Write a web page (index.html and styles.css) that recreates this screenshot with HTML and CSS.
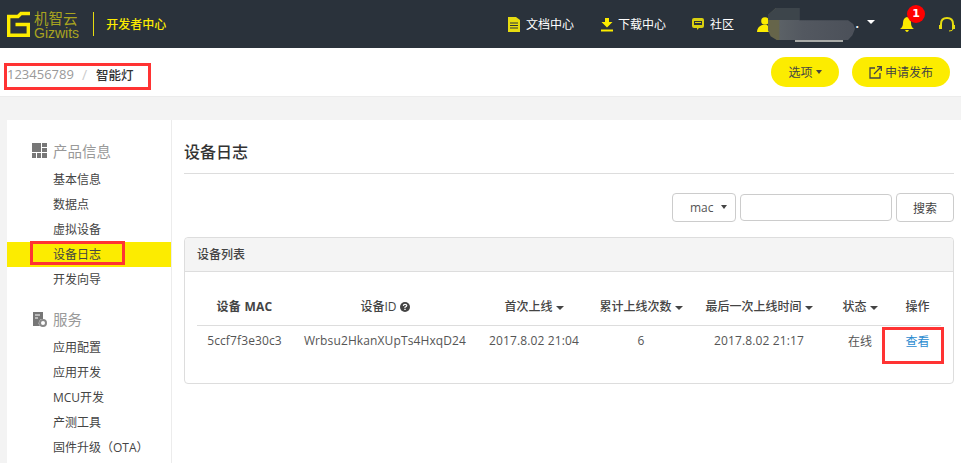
FILE: index.html
```html
<!DOCTYPE html>
<html lang="en">
<head>
    <meta charset="UTF-8">
    <title>设备日志</title>
    <link rel="stylesheet" href="styles.css">
</head>
<body>
    <header class="topbar">
        <div class="brand">
            <svg class="brand-mark" width="23" height="28" viewBox="0 0 23 28">
                <path d="M23 3.500H14L11 6.500H1.700V25.300H21.300V14.500H8.500" fill="none" stroke="#fcec00" stroke-width="3.400"/>
            </svg>
            <div class="brand-text">
                <span class="brand-cn">机智云</span>
                <span class="brand-en">Gizwits</span>
            </div>
            <span class="brand-title">开发者中心</span>
        </div>
        <nav class="topnav">
            <a class="nav-item nav-docs">
                <svg width="12" height="15" viewBox="0 0 12 15"><path d="M0 0H8L12 3V15H0Z" fill="#e6dc10"/><path d="M2 6H10M2 8.500H10M2 11H10" stroke="#2a323b"/></svg>
                文档中心
            </a>
            <a class="nav-item nav-down">
                <svg width="12" height="15" viewBox="0 0 12 15"><path d="M4 1H8V5H11.500L6 10.500L.5 5H4Z" fill="#fcec00"/><path d="M0 13.500H12" stroke="#fcec00" stroke-width="2"/></svg>
                下载中心
            </a>
            <a class="nav-item nav-forum">
                <svg width="12" height="14" viewBox="0 0 12 14"><path d="M2 1H10Q12 1 12 3V9Q12 11 10 11H7L5 13V11H2Q0 11 0 9V3Q0 1 2 1Z" fill="#d9d010"/><path d="M2 4H10V8H2Z" fill="#2a323b"/><path d="M3 5.500H9" stroke="#d9d010"/></svg>
                社区
            </a>
            <a class="nav-user">
                <svg width="13" height="15" viewBox="0 0 13 15"><circle cx="8" cy="4" r="3.800" fill="#fcec00"/><path d="M0 15Q0 10 5 8H10Q13 10 13 15Z" fill="#fcec00"/></svg>
                <span class="user-name">.</span>
                <i class="caret caret-white"></i>
            </a>
            <a class="nav-bell">
                <svg width="14" height="15" viewBox="0 0 14 15"><path d="M7 0Q11 1 11 6Q11 10 14 12H0Q3 10 3 6Q3 1 7 0Z" fill="#fcec00"/><path d="M5 13H9Q8 15 7 15Q6 15 5 13Z" fill="#fcec00"/></svg>
                <span class="badge">1</span>
            </a>
            <a class="nav-help">
                <svg width="16" height="16" viewBox="0 0 16 16"><path d="M2 12V8Q2 2 8 2Q14 2 14 8V12" fill="none" stroke="#e6dc10" stroke-width="2"/><path d="M0 9H3V13H0ZM13 9H16V13H13Z" fill="#e6dc10"/><path d="M14 13Q14 15 10 15" fill="none" stroke="#e6dc10"/></svg>
            </a>
        </nav>
    </header>

    <div class="subbar">
        <div class="crumbs">
            <span class="crumb-link">123456789</span>
            <span class="crumb-sep">/</span>
            <span class="crumb-current">智能灯</span>
        </div>
        <div class="sub-actions">
            <button class="pill pill-options">选项 <i class="caret caret-dark"></i></button>
            <button class="pill pill-publish">
                <svg width="13" height="13" viewBox="0 0 13 13"><path d="M6 2H1V12H11V7" fill="none" stroke="#444" stroke-width="1.300"/><path d="M5 8L12 1M8 .700H12.300V5" fill="none" stroke="#444" stroke-width="1.300"/></svg>
                申请发布
            </button>
        </div>
    </div>

    <div class="page">
        <aside class="sidebar">
            <div class="side-group">
                <h4 class="side-title">
                    <svg width="15" height="15" viewBox="0 0 15 15"><path d="M0 0H9V9H0ZM10 0H15V4H10ZM10 5H15V9H10ZM0 10H4V15H0ZM5 10H9V15H5ZM10 10H15V15H10Z" fill="#777"/></svg>
                    产品信息
                </h4>
                <a class="side-link">基本信息</a>
                <a class="side-link">数据点</a>
                <a class="side-link">虚拟设备</a>
                <a class="side-link side-active">设备日志</a>
                <a class="side-link">开发向导</a>
            </div>
            <div class="side-group">
                <h4 class="side-title">
                    <svg width="15" height="16" viewBox="0 0 15 16"><path d="M1 1H11V8A4 4 0 0 0 8 15H1Z" fill="#777"/><path d="M3 4H8M3 7H6" stroke="#fff"/><circle cx="11" cy="12" r="3" fill="none" stroke="#888" stroke-width="2"/></svg>
                    服务
                </h4>
                <a class="side-link">应用配置</a>
                <a class="side-link">应用开发</a>
                <a class="side-link">MCU开发</a>
                <a class="side-link">产测工具</a>
                <a class="side-link side-link-ota">固件升级（OTA）</a>
            </div>
        </aside>

        <main class="content">
            <h3 class="content-title">设备日志</h3>
            <form class="search-row">
                <div class="search-select">mac <i class="caret caret-dark"></i></div>
                <input class="search-input" type="text">
                <button class="search-btn" type="button">搜索</button>
            </form>
            <section class="panel">
                <div class="panel-head">设备列表</div>
                <div class="panel-body">
                    <table class="device-table">
                        <colgroup>
                            <col class="col-mac"><col class="col-id"><col class="col-first"><col class="col-count"><col class="col-last"><col class="col-state"><col class="col-op">
                        </colgroup>
                        <thead>
                            <tr>
                                <th class="th-mac">设备 MAC</th>
                                <th>设备ID <svg class="help-icon" width="10" height="10" viewBox="0 0 10 10"><circle cx="5" cy="5" r="5" fill="#444"/><path d="M3.300 3.800Q3.500 2.300 5 2.300Q6.800 2.300 6.800 3.600Q6.800 4.500 5 5.200V6" fill="none" stroke="#fff" stroke-width="1.200"/><path d="M4.300 6.800H5.700V8H4.300Z" fill="#fff"/></svg></th>
                                <th>首次上线 <i class="caret"></i></th>
                                <th>累计上线次数 <i class="caret"></i></th>
                                <th>最后一次上线时间 <i class="caret"></i></th>
                                <th>状态 <i class="caret"></i></th>
                                <th>操作</th>
                            </tr>
                        </thead>
                        <tbody>
                            <tr>
                                <td>5ccf7f3e30c3</td>
                                <td>Wrbsu2HkanXUpTs4HxqD24</td>
                                <td>2017.8.02 21:04</td>
                                <td>6</td>
                                <td>2017.8.02 21:17</td>
                                <td>在线</td>
                                <td><a class="view-link">查看</a></td>
                            </tr>
                        </tbody>
                    </table>
                </div>
            </section>
        </main>
    </div>

    <!-- things drawn on top of the screenshot -->
    <div class="blur-blob"></div>
    <div class="blur-strip"></div>
    <div class="mark mark-crumbs"></div>
    <div class="mark mark-side"></div>
    <div class="mark mark-view"></div>
</body>
</html>
```

FILE: styles.css
```css
* {
    box-sizing: border-box;
}

html, body {
    height: 463px;
    overflow: hidden;
}

body {
    margin: 0;
    font-family: "Open Sans", "Noto Sans CJK SC", sans-serif;
    font-size: 12px;
    color: #444;
    background-color: #f3f3f3;
    position: relative;
}

h3, h4 {
    margin: 0;
}

button {
    font-family: inherit;
}

.caret {
    display: inline-block;
    width: 0;
    height: 0;
    border-left: 4px solid transparent;
    border-right: 4px solid transparent;
    border-top: 4px solid #444;
    vertical-align: middle;
}

.caret-white {
    border-top-color: #fff;
    margin-top: -4px;
}

.caret-dark {
    border-left-width: 3.500px;
    border-right-width: 3.500px;
}

/* top bar */
.topbar {
    height: 48px;
    background-color: #2a323b;
    display: flex;
    align-items: center;
    justify-content: space-between;
}

.brand {
    display: flex;
    align-items: center;
    padding-left: 7px;
}

.brand-text {
    display: flex;
    flex-direction: column;
    margin-left: 4px;
    color: #a9a420;
    line-height: 1;
}

.brand-cn {
    font-size: 14.500px;
    line-height: 17px;
}

.brand-en {
    font-family: "Liberation Sans", sans-serif;
    font-size: 14px;
    line-height: 12px;
}

.brand-title {
    margin-left: 14px;
    padding-left: 12px;
    height: 24px;
    line-height: 25px;
    border-left: 1px solid #e6dc10;
    color: #fcec00;
    font-size: 12px;
    font-weight: 500;
}

.topnav {
    display: flex;
    align-items: center;
    color: #fff;
    height: 100%;
}

.nav-item {
    display: flex;
    align-items: center;
    gap: 6px;
}

.nav-down {
    margin-left: 27px;
    gap: 5px;
}

.nav-forum {
    margin-left: 26px;
    gap: 6px;
}

.nav-user {
    display: flex;
    align-items: center;
    margin-left: 23px;
}

.user-name {
    width: 97px;
    text-align: right;
    padding-right: 8px;
    font-weight: 700;
    line-height: 16px;
}

.nav-bell {
    margin-left: 25px;
    position: relative;
    display: flex;
}

.badge {
    position: absolute;
    left: 7px;
    top: -12px;
    width: 18px;
    height: 18px;
    border-radius: 50%;
    background-color: #f00;
    color: #fff;
    font-family: "DejaVu Sans", sans-serif;
    font-size: 11px;
    font-weight: 700;
    line-height: 18px;
    text-align: center;
}

.nav-help {
    margin-left: 25px;
    margin-right: 6px;
    display: flex;
}

/* breadcrumb bar */
.subbar {
    height: 49px;
    background-color: #fff;
    border-bottom: 1px solid #ececec;
    display: flex;
    align-items: center;
    justify-content: space-between;
    padding: 0 11px 0 7px;
}

.crumbs {
    display: flex;
    align-items: center;
    margin-top: 4px;
}

.crumb-link {
    font-size: 13px;
    color: #999;
}

.crumb-sep {
    margin: 0 9px 0 8px;
    font-size: 14px;
    color: #ccc;
}

.crumb-current {
    font-size: 12.500px;
    font-weight: 500;
    color: #333;
}

.sub-actions {
    display: flex;
    gap: 13px;
}

.pill {
    height: 30px;
    border: none;
    border-radius: 15px;
    background-color: #fcec00;
    color: #444;
    font-size: 12px;
    padding: 0;
    display: flex;
    align-items: center;
    justify-content: center;
}

.pill-options {
    width: 68px;
    gap: 3px;
}

.pill-publish {
    width: 98px;
    gap: 3px;
}

/* page body */
.page {
    display: flex;
    margin: 23px 0 0 7px;
    background-color: #fff;
    height: 343px;
}

.sidebar {
    width: 165px;
    flex-shrink: 0;
    border-right: 1px solid #ececec;
    padding-top: 18px;
}

.side-group {
    margin-bottom: 14px;
}

.side-title {
    display: flex;
    align-items: center;
    gap: 6px;
    height: 25px;
    padding-left: 25px;
    font-size: 14.500px;
    font-weight: 400;
    color: #999;
}

.side-link {
    display: block;
    height: 25px;
    line-height: 25px;
    padding-left: 46px;
    color: #444;
}

.side-group .side-title + .side-link {
    margin-top: 4px;
}

.side-link-ota {
    font-family: "Open Sans", "Noto Sans CJK TC", sans-serif;
    text-spacing-trim: space-all;
}

.side-active {
    background-color: #fcec00;
}

.content {
    flex: 1;
    padding: 0 8px 0 12px;
}

.content-title {
    height: 54px;
    line-height: 64px;
    font-size: 16px;
    font-weight: 500;
    color: #333;
    border-bottom: 1px solid #ddd;
}

.search-row {
    display: flex;
    justify-content: flex-end;
    align-items: center;
    margin: 19px 0 15px;
    height: 29px;
}

.search-select {
    width: 64px;
    height: 29px;
    line-height: 27px;
    border: 1px solid #ccc;
    border-radius: 4px;
    padding-left: 17px;
    color: #555;
}

.search-select .caret {
    margin-left: 4px;
    margin-top: -3px;
}

.search-input {
    width: 152px;
    height: 27px;
    margin: 0 4px;
    border: 1px solid #ccc;
    border-radius: 4px;
    padding: 0 6px;
}

.search-btn {
    width: 58px;
    height: 29px;
    border: 1px solid #ccc;
    border-radius: 4px;
    background-color: #fff;
    color: #444;
    font-size: 12px;
    padding: 0;
}

.panel {
    height: 147px;
    border: 1px solid #ddd;
    border-radius: 4px;
    background-color: #fff;
}

.panel-head {
    height: 34px;
    line-height: 33px;
    padding-left: 12px;
    background-color: #f4f4f4;
    border-bottom: 1px solid #ddd;
    font-weight: 500;
    color: #444;
    border-radius: 4px 4px 0 0;
}

.panel-body {
    padding: 20px 12px 0;
}

.device-table {
    width: 744px;
    table-layout: fixed;
    border-collapse: collapse;
}

.col-mac { width: 95px; }
.col-id { width: 186px; }
.col-first { width: 112px; }
.col-count { width: 102px; }
.col-last { width: 134px; }
.col-state { width: 68px; }
.col-op { width: 47px; }

.device-table th {
    height: 33px;
    padding: 0 0 5px;
    font-weight: 500;
    text-align: center;
    white-space: nowrap;
    color: #444;
    border-bottom: 1px solid #ddd;
}

.device-table th.th-mac {
    font-weight: 700;
    letter-spacing: .3px;
}

.help-icon {
    vertical-align: -1px;
}

.device-table td {
    height: 31px;
    padding: 0;
    text-align: center;
    white-space: nowrap;
    color: #555;
    letter-spacing: .12px;
}

.view-link {
    color: #2a8bd0;
}

/* blurred-out user name */
.blur-blob {
    position: absolute;
    left: 768px;
    top: 8px;
    width: 87px;
    height: 32px;
    clip-path: polygon(9% 0, 36% 0, 36% 38%, 92% 38%, 98% 50%, 100% 65%, 97% 85%, 92% 100%, 10% 100%, 3% 88%, 0 70%, 0 22%);
    background: linear-gradient(180deg, #3d454b 0, #3d454b 12px, transparent 12px), linear-gradient(90deg, #66654a 0, #66654a 12%, #5b6166 14%, #535860 40%, #4b5059 100%);
}

.blur-strip {
    position: absolute;
    left: 795px;
    top: 40px;
    width: 48px;
    height: 2px;
    background-color: #a9aba8;
}

/* red annotation boxes */
.mark {
    position: absolute;
    border: 3px solid #f33;
}

.mark-crumbs {
    left: 4px;
    top: 63px;
    width: 147px;
    height: 27px;
}

.mark-side {
    left: 30px;
    top: 241px;
    width: 95px;
    height: 24px;
}

.mark-view {
    left: 882px;
    top: 327px;
    width: 62px;
    height: 37px;
}
```
